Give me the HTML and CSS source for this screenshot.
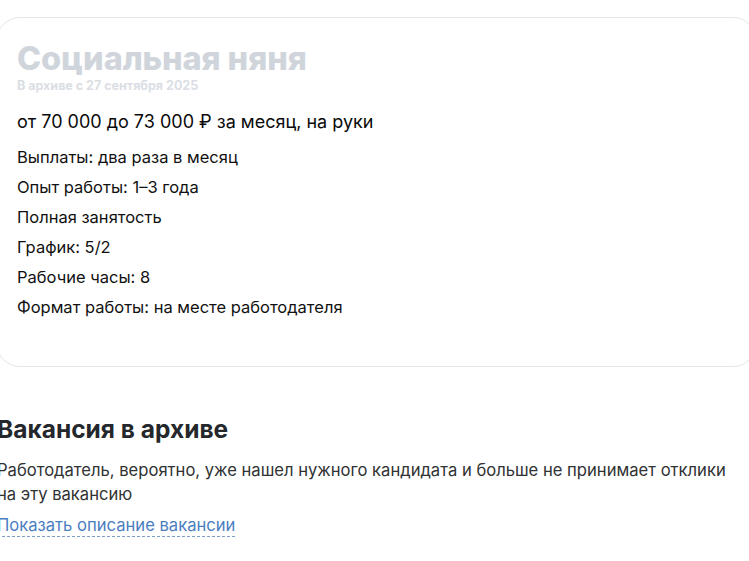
FILE: index.html
```html
<!DOCTYPE html>
<html>
  <head>
    <meta charset="utf-8">
    <title>Социальная няня</title>
    <link rel="stylesheet" href="styles.css">
  </head>
  <body>

    <section class="vacancy">
      <div class="card">
        <h1 class="title">Социальная няня</h1>
        <p class="archived">В архиве с 27 сентября 2025</p>
        <p class="salary">от 70&nbsp;000 до 73&nbsp;000 ₽ за месяц, на руки</p>
        <ul class="terms">
          <li>Выплаты: два раза в месяц</li>
          <li>Опыт работы: 1–3 года</li>
          <li>Полная занятость</li>
          <li>График: 5/2</li>
          <li>Рабочие часы: 8</li>
          <li>Формат работы: на месте работодателя</li>
        </ul>
      </div>

      <div class="archive-note">
        <h2>Вакансия в архиве</h2>
        <p>Работодатель, вероятно, уже нашел нужного кандидата и больше не принимает отклики на эту вакансию</p>
        <a class="show-desc" href="#">Показать описание вакансии</a>
      </div>
    </section>

  </body>
</html>
```

FILE: styles.css
```css
/* General styles */

html {
  background-color: white;
  font-family: "Inter", "Roboto", sans-serif;
}

body {
  margin: 0;
  overflow: hidden;
}

* {
  box-sizing: border-box;
}

/* Card */

.vacancy {
  padding-top: 17px;
}

.card {
  margin: 0 -8px 0 -4px;
  height: 350px;
  padding: 21px 20px;
  border: 1px solid #e3e5e8;
  border-radius: 24px;
}

.title {
  margin: 0;
  font-size: 32.5px;
  line-height: 40px;
  font-weight: 800;
  color: #d0d5dc;
  letter-spacing: -0.1px;
}

.archived {
  margin: -1px 0 0;
  font-size: 12.5px;
  line-height: 16px;
  font-weight: 700;
  color: #dadee4;
}

.salary {
  margin: 15px 0 0;
  font-size: 18px;
  line-height: 26px;
  color: #0a0a0a;
}

.terms {
  list-style: none;
  margin: 7px 0 0;
  padding: 0;
}

.terms li {
  font-size: 16.5px;
  line-height: 30px;
  color: #111;
}

/* Archive note */

.archive-note {
  margin-top: 47px;
  margin-left: -3px;
  max-width: 740px;
}

.archive-note h2 {
  margin: 0;
  font-size: 24.5px;
  line-height: 30px;
  font-weight: 700;
  color: #24272b;
}

.archive-note p {
  margin: 14px 0 0;
  font-size: 16.6px;
  line-height: 24px;
  color: #303233;
}

.show-desc {
  display: inline-block;
  margin-top: 8px;
  font-size: 16.6px;
  line-height: 22px;
  color: #4b7dbf;
  text-decoration: none;
  border-bottom: 1px dashed #7e9fcc;
}
```
